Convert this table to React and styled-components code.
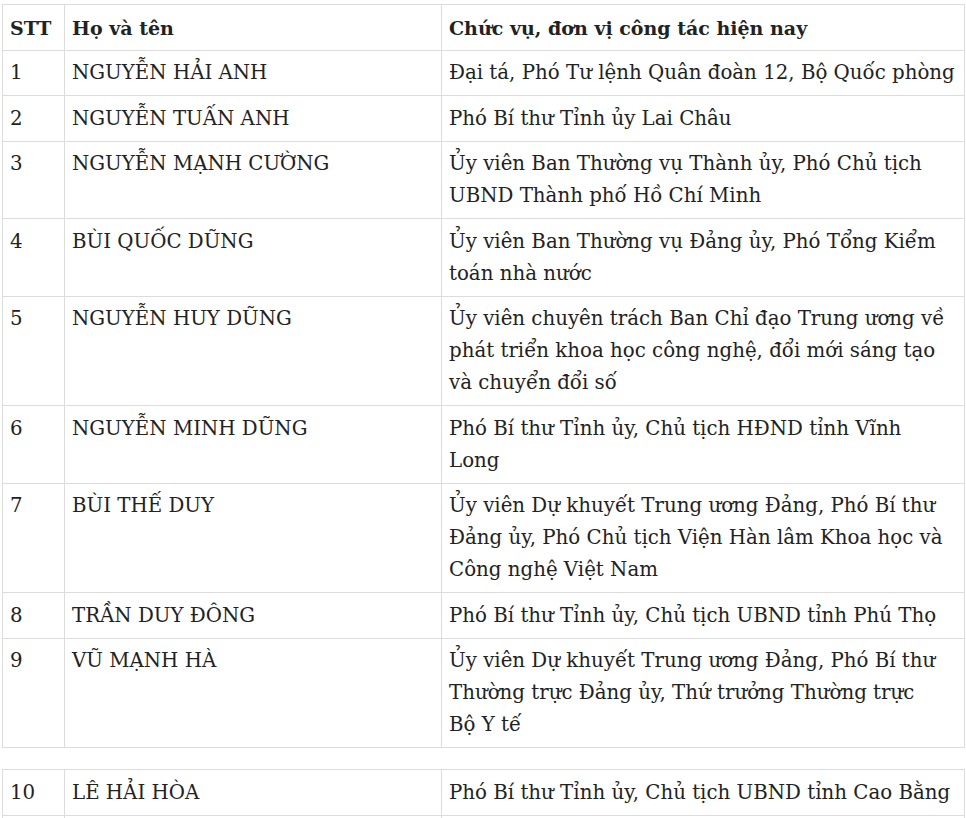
import React from "react";
import styled, { createGlobalStyle } from "styled-components";

const GlobalStyle = createGlobalStyle`
    html, body {
        margin: 0;
        padding: 0;
        background: #fff;
    }
`;

const Page = styled.div`
    padding: 4px 3px 0 2px;
    font-family: "DejaVu Serif", "Liberation Serif", serif;
    font-size: 19.8px;
    line-height: 32px;
    color: #222;
    display: flex;
    flex-direction: column;
    gap: 21px;
`;

const Table = styled.table`
    width: 962px;
    border-collapse: collapse;
    table-layout: fixed;
`;

const Col = styled.col`
    width: ${p => p.$w}px;
`;

const Cell = styled.td`
    border: 1px solid #dcdcdc;
    padding: 6.5px 7px 6px;
    vertical-align: top;
    font-weight: ${p => (p.$head ? "bold" : "normal")};
    font-size: ${p => (p.$head ? "19px" : "inherit")};
`;

const rows = [
    ["1", "NGUYỄN HẢI ANH", "Đại tá, Phó Tư lệnh Quân đoàn 12, Bộ Quốc phòng"],
    ["2", "NGUYỄN TUẤN ANH", "Phó Bí thư Tỉnh ủy Lai Châu"],
    ["3", "NGUYỄN MẠNH CƯỜNG", "Ủy viên Ban Thường vụ Thành ủy, Phó Chủ tịch UBND Thành phố Hồ Chí Minh"],
    ["4", "BÙI QUỐC DŨNG", "Ủy viên Ban Thường vụ Đảng ủy, Phó Tổng Kiểm toán nhà nước"],
    [
        "5",
        "NGUYỄN HUY DŨNG",
        "Ủy viên chuyên trách Ban Chỉ đạo Trung ương về phát triển khoa học công nghệ, đổi mới sáng tạo và chuyển đổi số",
    ],
    ["6", "NGUYỄN MINH DŨNG", "Phó Bí thư Tỉnh ủy, Chủ tịch HĐND tỉnh Vĩnh Long"],
    [
        "7",
        "BÙI THẾ DUY",
        "Ủy viên Dự khuyết Trung ương Đảng, Phó Bí thư Đảng ủy, Phó Chủ tịch Viện Hàn lâm Khoa học và Công nghệ Việt Nam",
    ],
    ["8", "TRẦN DUY ĐÔNG", "Phó Bí thư Tỉnh ủy, Chủ tịch UBND tỉnh Phú Thọ"],
    [
        "9",
        "VŨ MẠNH HÀ",
        "Ủy viên Dự khuyết Trung ương Đảng, Phó Bí thư Thường trực Đảng ủy, Thứ trưởng Thường trực Bộ\u00a0Y\u00a0tế",
    ],
];

const extra = [["10", "LÊ HẢI HÒA", "Phó Bí thư Tỉnh ủy, Chủ tịch UBND tỉnh Cao Bằng"], ["", "", ""]];

const Cols = () => (
    <colgroup>
        <Col $w={62} />
        <Col $w={377} />
        <Col $w={523} />
    </colgroup>
);

const Row = ({ cells, head }) => (
    <tr>
        {cells.map((c, i) => (
            <Cell key={i} $head={head}>
                {c}
            </Cell>
        ))}
    </tr>
);

export default function App() {
    return (
        <>
            <GlobalStyle />
            <Page>
                <Table>
                    <Cols />
                    <tbody>
                        <Row head cells={["STT", "Họ và tên", "Chức vụ, đơn vị công tác hiện nay"]} />
                        {rows.map(r => (
                            <Row key={r[0]} cells={r} />
                        ))}
                    </tbody>
                </Table>
                <Table>
                    <Cols />
                    <tbody>
                        {extra.map((r, i) => (
                            <Row key={i} cells={r} />
                        ))}
                    </tbody>
                </Table>
            </Page>
        </>
    );
}
